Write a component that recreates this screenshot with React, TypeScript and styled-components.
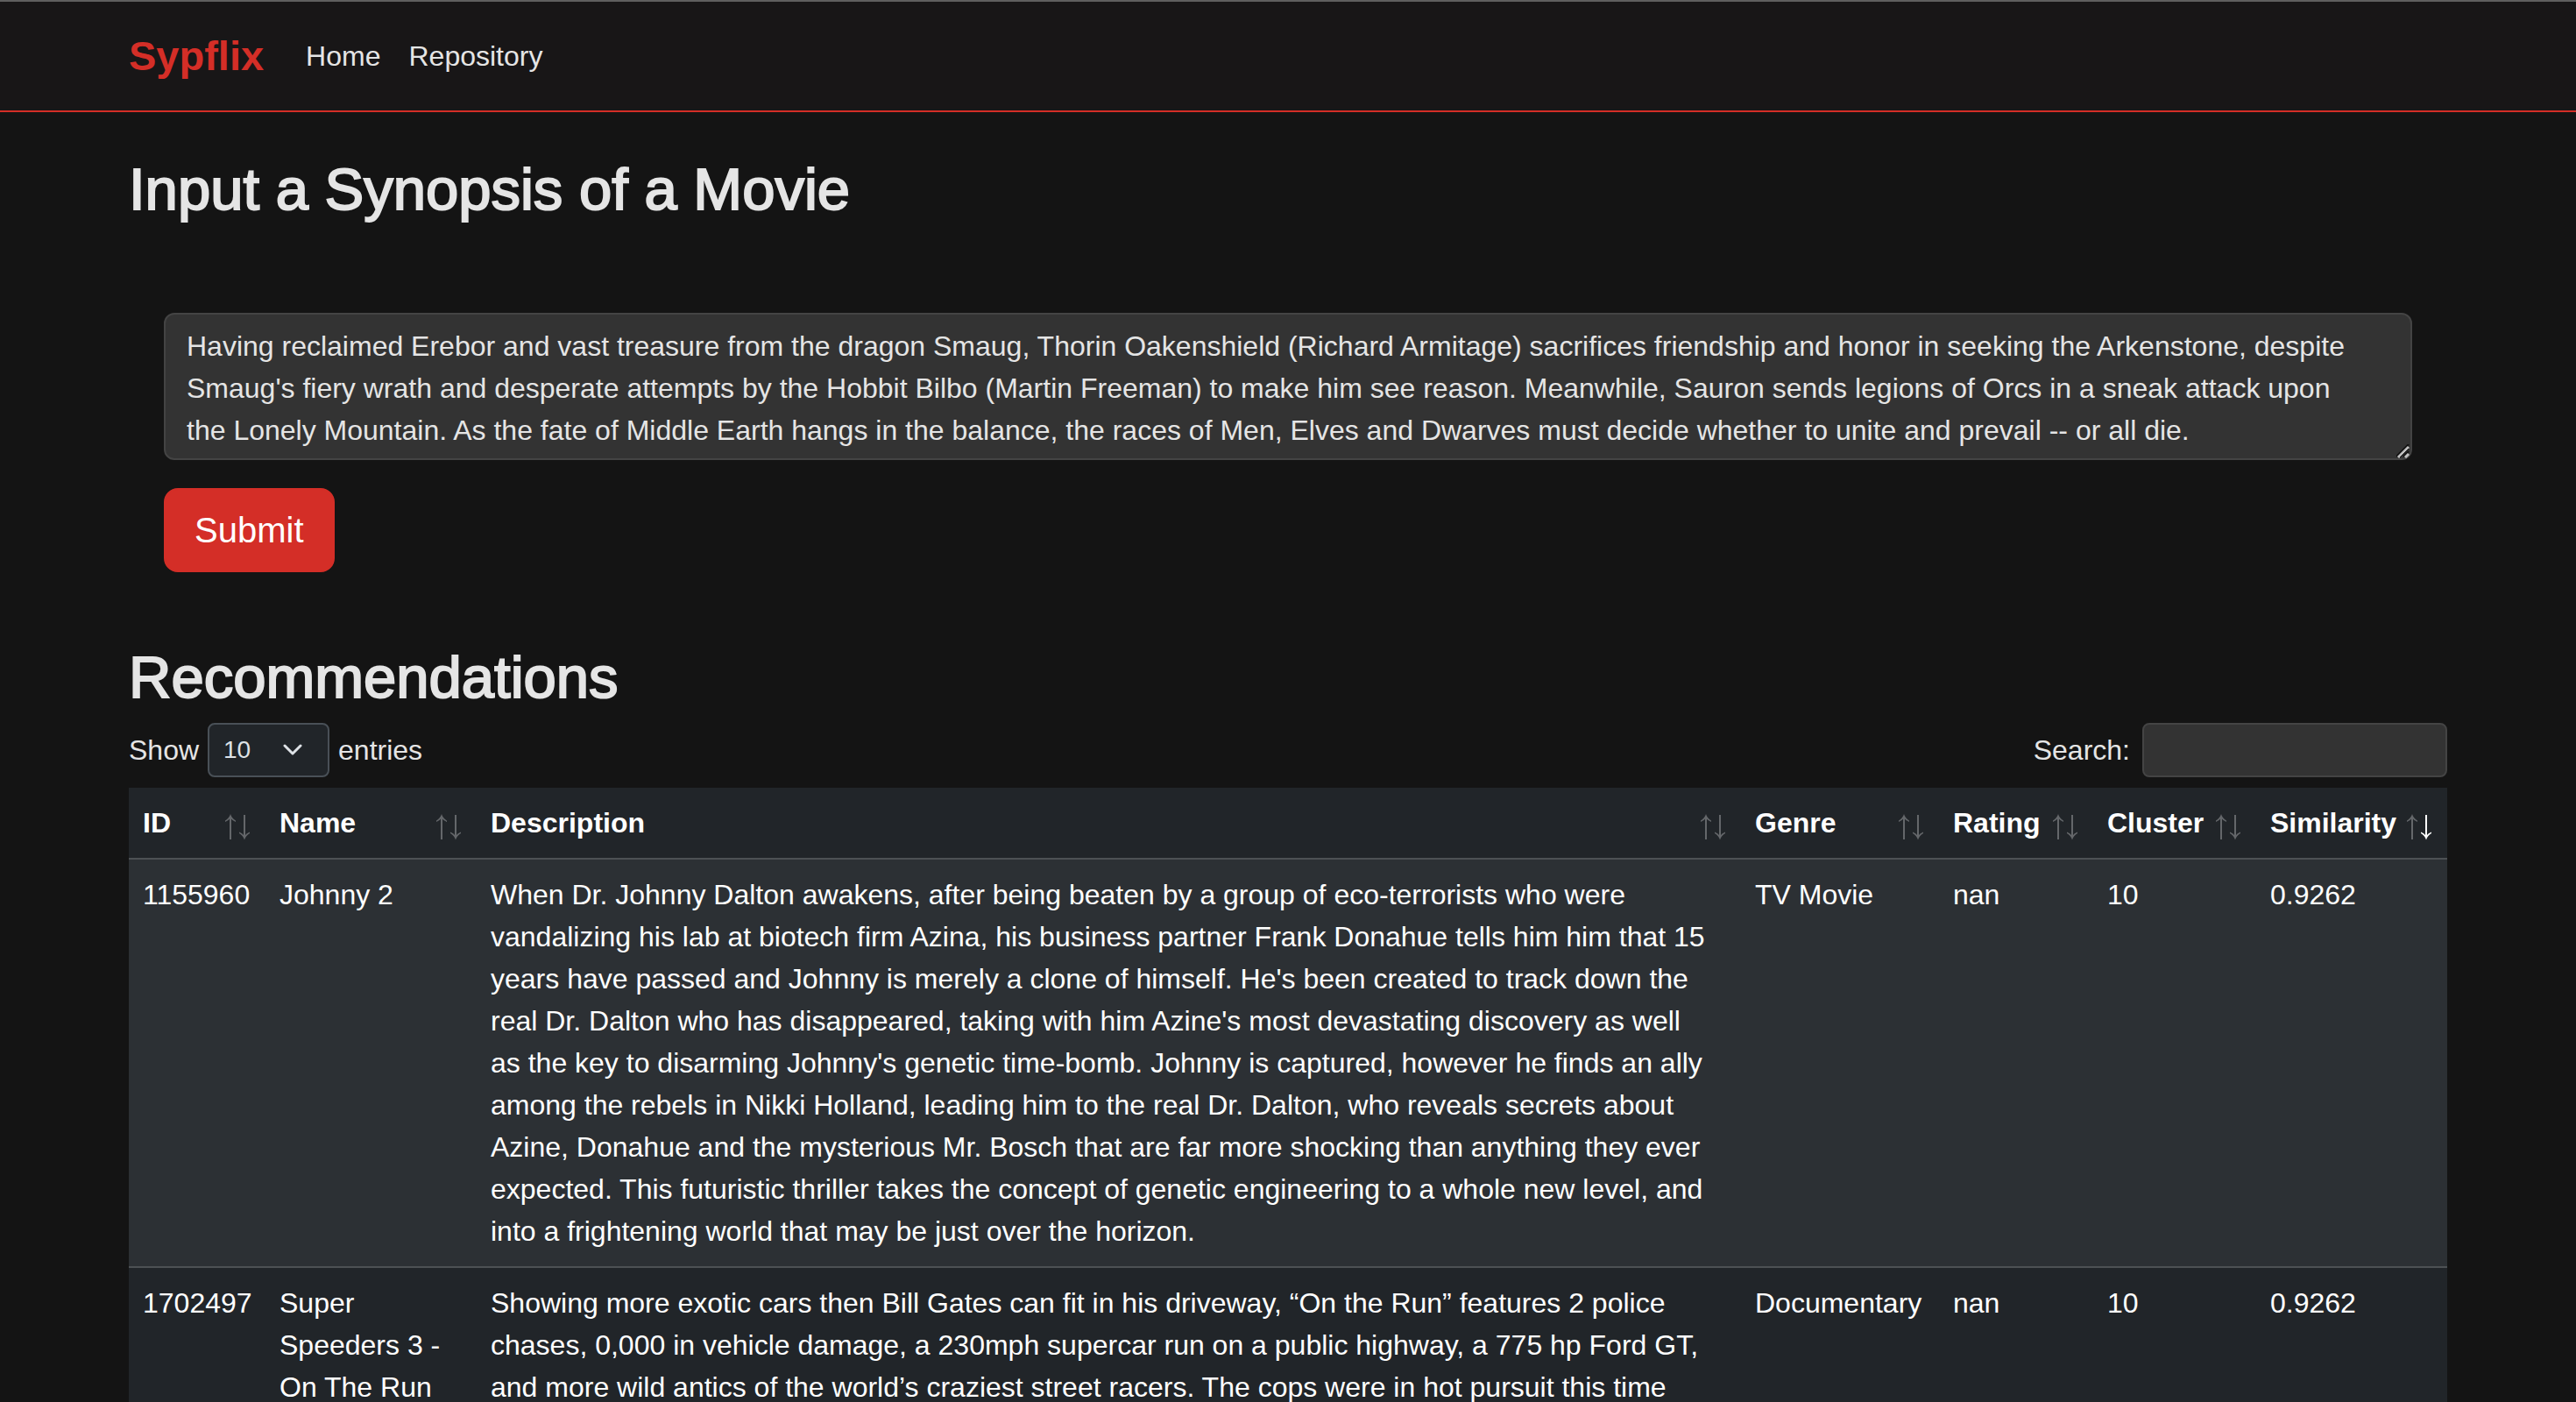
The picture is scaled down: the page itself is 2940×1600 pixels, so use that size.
import React, { useState } from "react";
import styled, { createGlobalStyle, css } from "styled-components";

const GlobalStyle = createGlobalStyle`
  *, *::before, *::after { box-sizing: border-box; }
  html { background: #141414; }
  body {
    margin: 0;
    background: #141414;
    color: #e5e5e5;
    font-family: "Liberation Sans", Arial, sans-serif;
    font-size: 32px;
    line-height: 48px;
    overflow: hidden;
  }
`;

const Page = styled.div`
  height: 100vh;
  overflow: hidden;
`;

const Navbar = styled.header`
  display: flex;
  align-items: center;
  gap: 48px;
  height: 128px;
  padding: 0 5%;
  background: #181617;
  border-top: 2px solid #5f5f5f;
  border-bottom: 2px solid #d42e27;
`;

const Brand = styled.a`
  color: #d42e27;
  font-size: 47px;
  font-weight: 700;
  text-decoration: none;
`;

const NavLinks = styled.nav`
  display: flex;
  gap: 32px;
`;

const NavLink = styled.a`
  color: #e5e5e5;
  text-decoration: none;
`;

const Content = styled.main`
  padding: 48px 5% 0;
`;

const Heading = styled.h2`
  margin: 0;
  font-size: 67px;
  font-weight: 400;
  line-height: 80px;
  -webkit-text-stroke: 2px #e5e5e5;
`;

const SynopsisForm = styled.form`
  display: flex;
  flex-direction: column;
  align-items: flex-start;
  gap: 32px;
  padding: 101px 40px 80px;
`;

const TextAreaBox = styled.div`
  position: relative;
  width: 100%;
`;

const TextArea = styled.textarea`
  display: block;
  width: 100%;
  height: 168px;
  padding: 12px 48px 8px 24px;
  border: 2px solid #444;
  border-radius: 12px;
  background: #333;
  color: #e5e5e5;
  font: inherit;
  resize: none;
  overflow: hidden;
  outline: none;
`;

const ResizeGrip = styled.svg`
  position: absolute;
  right: 2px;
  bottom: 2px;
  pointer-events: none;
`;

const SubmitButton = styled.button`
  padding: 16px 33px;
  border: 2px solid #d42e27;
  border-radius: 16px;
  background: #d42e27;
  color: #fff;
  font: inherit;
  font-size: 40px;
  line-height: 60px;
`;

const TableControls = styled.div`
  display: flex;
  justify-content: space-between;
  padding: 12px 0;
`;

const ControlLabel = styled.label<{ $gap: number }>`
  display: flex;
  align-items: center;
  gap: ${(p) => p.$gap}px;
`;

const controlBox = css`
  height: 62px;
  border-radius: 8px;
  color: #dee2e6;
  font: inherit;
  font-size: 28px;
  outline: none;
`;

const SelectBox = styled.span`
  position: relative;
  display: flex;
  align-items: center;
`;

const LengthSelect = styled.select`
  ${controlBox}
  width: 139px;
  padding: 0 16px;
  border: 2px solid #495057;
  background: #212529;
  appearance: none;
`;

const Chevron = styled.svg`
  position: absolute;
  right: 30px;
  pointer-events: none;
`;

const SearchInput = styled.input`
  ${controlBox}
  width: 348px;
  padding: 0 16px;
  border: 2px solid #444;
  background: #333;
`;

const DataTable = styled.table`
  width: 100%;
  table-layout: fixed;
  border-spacing: 0;
  color: #fff;
`;

const Column = styled.col<{ $width?: number }>`
  width: ${(p) => (p.$width ? `${p.$width}px` : "auto")};
`;

const HeaderCell = styled.th`
  padding: 16px 18px 16px 16px;
  border-bottom: 2px solid #4d5154;
  background: #212529;
  text-align: left;
`;

const HeaderContent = styled.div`
  display: flex;
  justify-content: space-between;
  align-items: flex-end;
`;

const Row = styled.tr<{ $striped: boolean }>`
  background: ${(p) => (p.$striped ? "#2c3034" : "#212529")};
`;

const Cell = styled.td`
  padding: 16px;
  border-bottom: 2px solid #4d5154;
  vertical-align: top;
`;

const DescriptionCell = styled(Cell)`
  padding-right: 28px;
`;

type Movie = {
  id: string;
  name: string;
  description: string;
  genre: string;
  rating: string;
  cluster: string;
  similarity: string;
};

const columns: { label: string; width?: number; sorted?: boolean }[] = [
  { label: "ID", width: 156 },
  { label: "Name", width: 241 },
  { label: "Description" },
  { label: "Genre", width: 226 },
  { label: "Rating", width: 176 },
  { label: "Cluster", width: 186 },
  { label: "Similarity", width: 218, sorted: true },
];

const movies: Movie[] = [
  {
    id: "1155960",
    name: "Johnny 2",
    description:
      "When Dr. Johnny Dalton awakens, after being beaten by a group of eco-terrorists who were vandalizing his lab at biotech firm Azina, his business partner Frank Donahue tells him him that 15 years have passed and Johnny is merely a clone of himself. He's been created to track down the real Dr. Dalton who has disappeared, taking with him Azine's most devastating discovery as well as the key to disarming Johnny's genetic time-bomb. Johnny is captured, however he finds an ally among the rebels in Nikki Holland, leading him to the real Dr. Dalton, who reveals secrets about Azine, Donahue and the mysterious Mr. Bosch that are far more shocking than anything they ever expected. This futuristic thriller takes the concept of genetic engineering to a whole new level, and into a frightening world that may be just over the horizon.",
    genre: "TV Movie",
    rating: "nan",
    cluster: "10",
    similarity: "0.9262",
  },
  {
    id: "1702497",
    name: "Super Speeders 3 - On The Run",
    description:
      "Showing more exotic cars then Bill Gates can fit in his driveway, “On the Run” features 2 police chases, 0,000 in vehicle damage, a 230mph supercar run on a public highway, a 775 hp Ford GT, and more wild antics of the world’s craziest street racers. The cops were in hot pursuit this time",
    genre: "Documentary",
    rating: "nan",
    cluster: "10",
    similarity: "0.9262",
  },
];

const initialSynopsis =
  "Having reclaimed Erebor and vast treasure from the dragon Smaug, Thorin Oakenshield (Richard Armitage) sacrifices friendship and honor in seeking the Arkenstone, despite Smaug's fiery wrath and desperate attempts by the Hobbit Bilbo (Martin Freeman) to make him see reason. Meanwhile, Sauron sends legions of Orcs in a sneak attack upon the Lonely Mountain. As the fate of Middle Earth hangs in the balance, the races of Men, Elves and Dwarves must decide whether to unite and prevail -- or all die.";

const dimArrow = "#64676a";

function SortIcon({ sorted }: { sorted?: boolean }) {
  const down = sorted ? "#fff" : dimArrow;
  return (
    <svg width="28" height="34" viewBox="0 0 28 34" aria-hidden="true">
      <path d="M6 29V3" stroke={dimArrow} strokeWidth="2" />
      <path d="M6 0Q7.5 5 12 7.5V9Q8.500 8 6 4.500Q3.500 8 0 9V7.500Q4.500 5 6 0Z" fill={dimArrow} />
      <path d="M22 1V27" stroke={down} strokeWidth="2" />
      <path d="M22 29.500Q23.500 24.500 28 22V20.500Q24.500 21.500 22 25Q19.500 21.500 16 20.500V22Q20.500 24.500 22 29.500Z" fill={down} />
    </svg>
  );
}

export default function App() {
  const [synopsis, setSynopsis] = useState(initialSynopsis);
  const [length, setLength] = useState("10");
  const [query, setQuery] = useState("");

  return (
    <Page>
      <GlobalStyle />
      <Navbar>
        <Brand href="#">Sypflix</Brand>
        <NavLinks>
          <NavLink href="#home">Home</NavLink>
          <NavLink href="#repository">Repository</NavLink>
        </NavLinks>
      </Navbar>
      <Content>
        <Heading id="synopsis-heading">Input a Synopsis of a Movie</Heading>
        <SynopsisForm onSubmit={(e) => e.preventDefault()}>
          <TextAreaBox>
            <TextArea
              aria-labelledby="synopsis-heading"
              spellCheck={false}
              value={synopsis}
              onChange={(e) => setSynopsis(e.target.value)}
            />
            <ResizeGrip width="16" height="16" viewBox="0 0 16 16" fill="none" aria-hidden="true">
              <path d="M0 14L14 0M8 14L14 8" stroke="#111" strokeWidth="2" />
              <path d="M2 15L14 3M10 15L14 11" stroke="#c0c0c0" strokeWidth="3" />
              <path d="M4 15L14 5" stroke="#111" strokeWidth="1" />
            </ResizeGrip>
          </TextAreaBox>
          <SubmitButton type="submit">Submit</SubmitButton>
        </SynopsisForm>
        <Heading>Recommendations</Heading>
        <TableControls>
          <ControlLabel $gap={10}>
            Show
            <SelectBox>
              <LengthSelect value={length} onChange={(e) => setLength(e.target.value)}>
                <option>10</option>
                <option>25</option>
                <option>50</option>
                <option>100</option>
              </LengthSelect>
              <Chevron width="24" height="14" viewBox="0 0 24 14" fill="none" aria-hidden="true">
                <path d="M3 2L12 11L21 2" stroke="#dee2e6" strokeWidth="3" strokeLinecap="round" strokeLinejoin="round" />
              </Chevron>
            </SelectBox>
            entries
          </ControlLabel>
          <ControlLabel $gap={14}>
            Search:
            <SearchInput type="search" value={query} onChange={(e) => setQuery(e.target.value)} />
          </ControlLabel>
        </TableControls>
        <DataTable>
          <colgroup>
            {columns.map((c) => (
              <Column key={c.label} $width={c.width} />
            ))}
          </colgroup>
          <thead>
            <tr>
              {columns.map((c) => (
                <HeaderCell key={c.label} scope="col">
                  <HeaderContent>
                    {c.label}
                    <SortIcon sorted={c.sorted} />
                  </HeaderContent>
                </HeaderCell>
              ))}
            </tr>
          </thead>
          <tbody>
            {movies.map((m, i) => (
              <Row key={m.id} $striped={i % 2 === 0}>
                <Cell>{m.id}</Cell>
                <Cell>{m.name}</Cell>
                <DescriptionCell>{m.description}</DescriptionCell>
                <Cell>{m.genre}</Cell>
                <Cell>{m.rating}</Cell>
                <Cell>{m.cluster}</Cell>
                <Cell>{m.similarity}</Cell>
              </Row>
            ))}
          </tbody>
        </DataTable>
      </Content>
    </Page>
  );
}
